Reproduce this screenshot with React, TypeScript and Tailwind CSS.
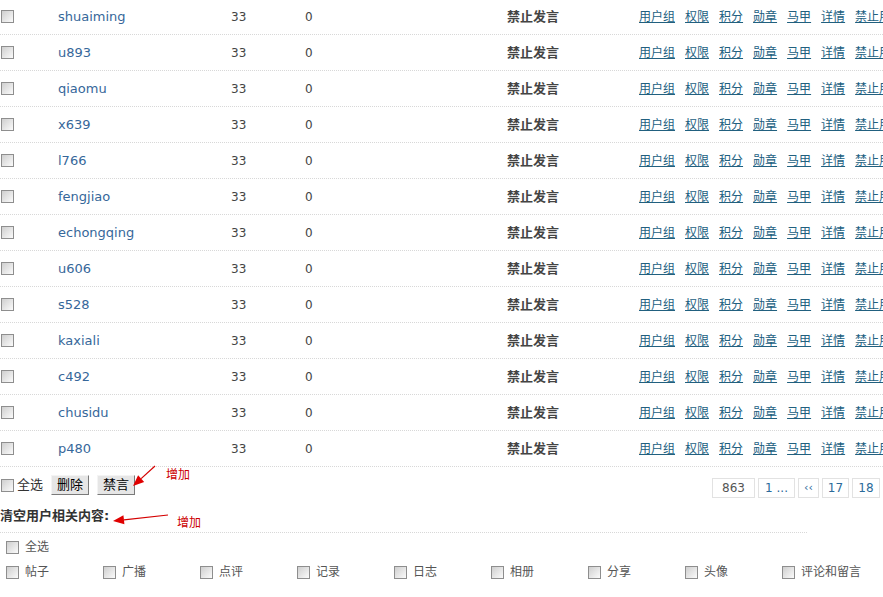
import React from 'react';

const users = [
  'shuaiming', 'u893', 'qiaomu', 'x639', 'l766', 'fengjiao', 'echongqing',
  'u606', 's528', 'kaxiali', 'c492', 'chusidu', 'p480'
];

const actions = ['用户组', '权限', '积分', '勋章', '马甲', '详情', '禁止用户'];

const clearItems = ['帖子', '广播', '点评', '记录', '日志', '相册', '分享', '头像', '评论和留言'];

const font = { fontFamily: '"DejaVu Sans", "Noto Sans CJK SC", sans-serif' };

function Box() {
  return (
    <span className="inline-block w-[13px] h-[13px] shrink-0 border border-[#8e8e8e] bg-linear-to-br from-[#cfcfcf] to-[#fbfbfb]" />
  );
}

function Btn({ children }: { children: React.ReactNode }) {
  return (
    <button className="h-[20px] px-[5px] text-[13px] leading-[18px] text-black bg-[#e6e6e6] border border-t-[#f4f4f4] border-l-[#f4f4f4] border-b-[#7a7a7a] border-r-[#7a7a7a]">
      {children}
    </button>
  );
}

function Arrow({ x1, y1, x2, y2 }: { x1: number; y1: number; x2: number; y2: number }) {
  const a = Math.atan2(y2 - y1, x2 - x1);
  const l = 11;
  const w = 4.5;
  const bx = x2 - l * Math.cos(a);
  const by = y2 - l * Math.sin(a);
  const px = -Math.sin(a) * w;
  const py = Math.cos(a) * w;
  return (
    <svg className="absolute left-0 top-0 pointer-events-none" width="883" height="597">
      <line x1={x1} y1={y1} x2={bx} y2={by} stroke="#d40000" strokeWidth="1.2" />
      <polygon points={`${x2},${y2} ${bx + px},${by + py} ${bx - px},${by - py}`} fill="#e00000" />
    </svg>
  );
}

export default function App() {
  return (
    <div className="relative w-[883px] h-[597px] overflow-hidden bg-white text-[12px] text-[#444]" style={font}>
      <div className="-mt-[1px]">
        {users.map((u) => (
          <div key={u} className="flex items-center h-[36px] border-b border-dotted border-[#d8d8d8] whitespace-nowrap">
            <div className="w-[58px] shrink-0 pl-[1px] flex"><Box /></div>
            <div className="w-[173px] shrink-0 text-[13px] text-[#36679a]">{u}</div>
            <div className="w-[74px] shrink-0">33</div>
            <div className="w-[202px] shrink-0">0</div>
            <div className="w-[132px] shrink-0 font-bold text-[13px] text-[#444]">禁止发言</div>
            <div className="flex gap-[10px] shrink-0">
              {actions.map((a) => (
                <a key={a} href="#" className="underline text-[#21607f]">{a}</a>
              ))}
            </div>
          </div>
        ))}
      </div>

      <div className="flex justify-between mt-[8px]">
        <div className="flex items-center h-[20px] pl-[1px]">
          <Box />
          <span className="ml-[3px] text-[13px] text-[#333]">全选</span>
          <span className="ml-[8px] flex"><Btn>删除</Btn></span>
          <span className="ml-[8px] flex"><Btn>禁言</Btn></span>
        </div>
        <div className="flex gap-[3px] mt-[3px] pr-[3px]">
          <span className="w-[43px] h-[20px] flex items-center justify-center border border-[#e2e2e2] text-[#555]">863</span>
          <a href="#" className="w-[37px] h-[20px] flex items-center justify-center border border-[#e2e2e2] text-[#2b6a9a]">1 ...</a>
          <a href="#" className="w-[21px] h-[20px] flex items-center justify-center border border-[#e2e2e2] text-[#2b6a9a] text-[11px]">‹‹</a>
          <a href="#" className="w-[27px] h-[20px] flex items-center justify-center border border-[#e2e2e2] text-[#2b6a9a]">17</a>
          <a href="#" className="w-[28px] h-[20px] flex items-center justify-center border border-[#e2e2e2] text-[#2b6a9a]">18</a>
        </div>
      </div>

      <div className="mt-[8px] w-[807px] pb-[6px] border-b border-dotted border-[#d8d8d8]">
        <div className="h-[20px] leading-[20px] font-bold text-[13px] text-[#333]">清空用户相关内容:</div>
      </div>

      <div className="flex items-center h-[20px] mt-[4px] pl-[6px] text-[#555]">
        <Box />
        <span className="ml-[6px]">全选</span>
      </div>
      <div className="flex h-[20px] mt-[5px] pl-[6px] text-[#555] whitespace-nowrap">
        {clearItems.map((c) => (
          <div key={c} className="w-[97px] shrink-0 flex items-center">
            <Box />
            <span className="ml-[6px]">{c}</span>
          </div>
        ))}
      </div>

      <Arrow x1={155} y1={466} x2={133} y2={486} />
      <span className="absolute left-[166px] top-[466px] text-[12px] text-[#cc0000]">增加</span>
      <Arrow x1={168} y1={515} x2={113} y2={521} />
      <span className="absolute left-[177px] top-[514px] text-[12px] text-[#cc0000]">增加</span>
    </div>
  );
}
